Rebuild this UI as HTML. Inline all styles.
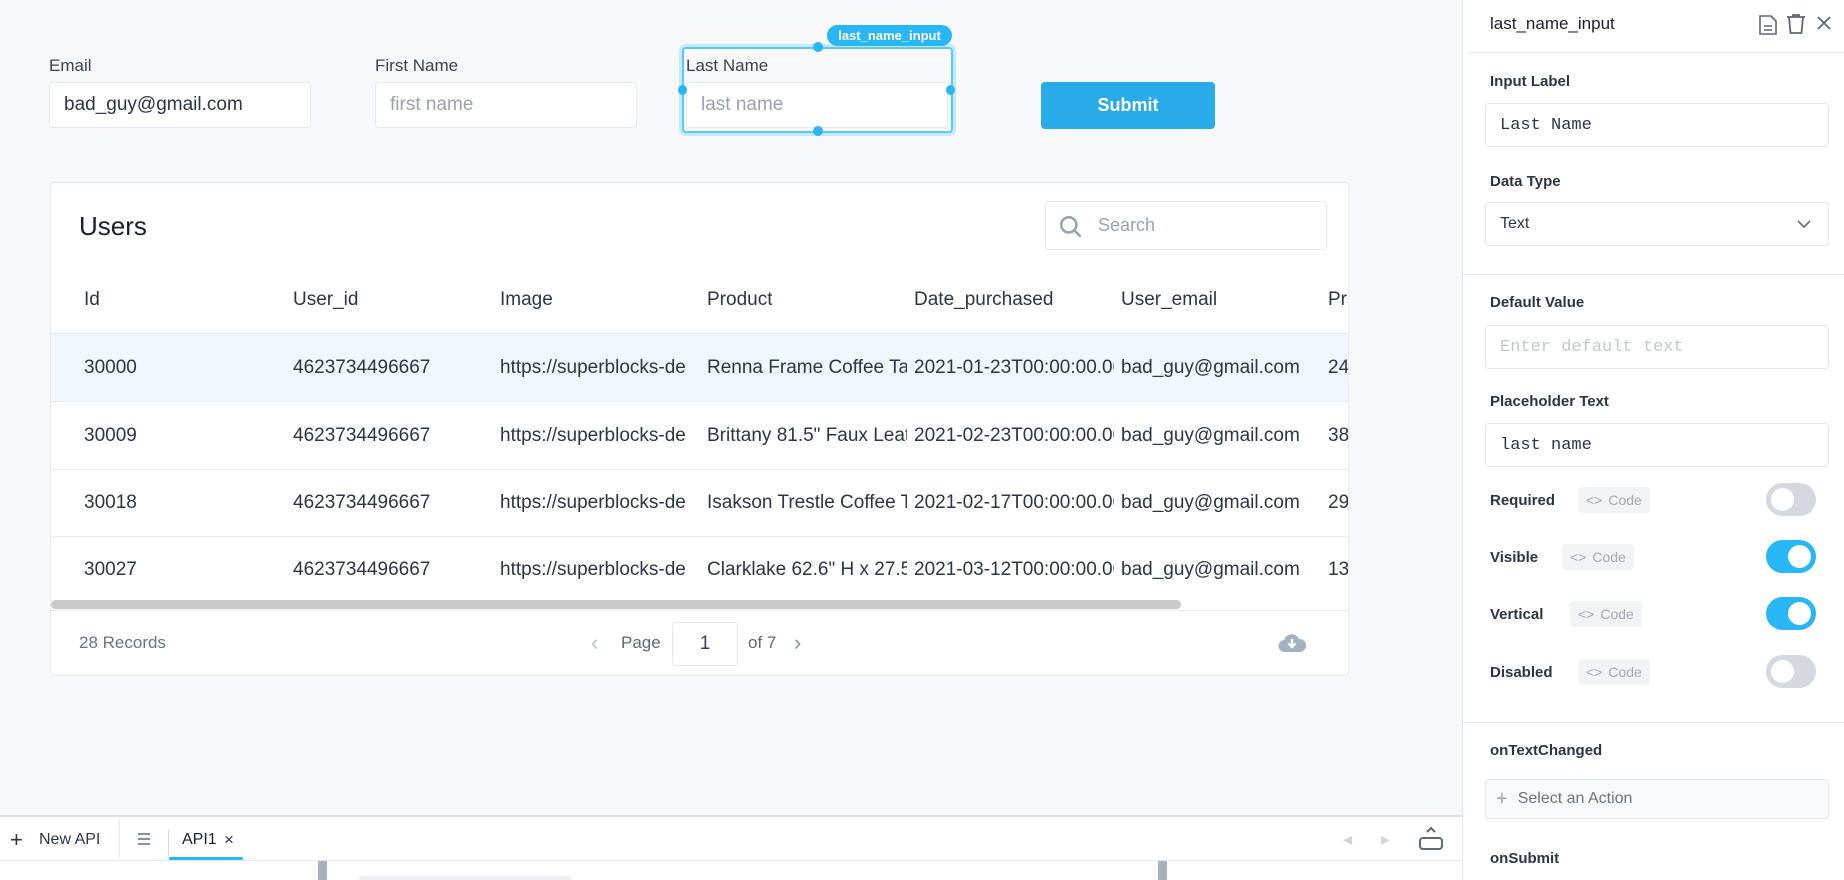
<!DOCTYPE html>
<html><head><meta charset="utf-8">
<style>
*{box-sizing:border-box;margin:0;padding:0}
body{width:1844px;height:880px;overflow:hidden;background:#f7f8fa;font-family:"Liberation Sans",sans-serif;color:#2d3444;position:relative}
.abs{position:absolute}
.lbl{font-size:17px;color:#3a4152;font-weight:500}
.inp{background:#fff;border:1px solid #e5e8ee;border-radius:4px;font-size:19px;padding-left:14px;display:flex;align-items:center}
.ph{color:#9aa1ad}
.card{background:#fff;border:1px solid #e6e8ed;border-radius:4px}
.cell{position:absolute;font-size:19px;white-space:nowrap;overflow:hidden;color:#2d3444}
.hline{position:absolute;left:0;height:1px;background:#e8eaee}
.panel{position:absolute;left:1462px;top:0;width:382px;height:880px;background:#fff;border-left:1px solid #e3e6eb}
.pl{position:absolute;left:27px;font-size:15px;font-weight:bold;color:#2d3444}
.pi{position:absolute;left:22px;width:344px;height:44px;border:1px solid #e3e6eb;border-radius:4px;font-family:"Liberation Mono",monospace;font-size:17px;display:flex;align-items:center;padding-left:14px;color:#2d3444}
.code{position:absolute;height:26px;background:#f1f3f5;border-radius:4px;color:#a2a8b3;font-size:14px;display:flex;align-items:center;padding:0 8px;gap:6px}
.tg{position:absolute;left:303px;width:50px;height:33px;border-radius:17px;background:#d5d9df}
.tg::after{content:"";position:absolute;top:5px;left:5px;width:23px;height:23px;border-radius:50%;background:#fff}
.tg.on{background:#29b6f6}
.tg.on::after{left:22px}
.sep{position:absolute;left:0;width:382px;height:1px;background:#e6e8ec}
</style></head><body>

<div class="abs lbl" style="left:49px;top:56px">Email</div>
<div class="abs inp" style="left:49px;top:82px;width:262px;height:46px">bad_guy@gmail.com</div>
<div class="abs lbl" style="left:375px;top:56px">First Name</div>
<div class="abs inp ph" style="left:375px;top:82px;width:262px;height:46px">first name</div>

<div class="abs" style="left:682px;top:47px;width:271px;height:86px;border:2px solid #5ac8fa;border-radius:4px;box-shadow:0 0 0 3px #c5e9fb"></div>
<div class="abs lbl" style="left:686px;top:56px">Last Name</div>
<div class="abs inp ph" style="left:686px;top:82px;width:262px;height:46px">last name</div>
<div class="abs" style="left:813px;top:42px;width:10px;height:10px;border-radius:50%;background:#29b6f6"></div>
<div class="abs" style="left:813px;top:126px;width:10px;height:10px;border-radius:50%;background:#29b6f6"></div>
<div class="abs" style="left:678px;top:85px;width:9px;height:10px;border-radius:50%;background:#29b6f6"></div>
<div class="abs" style="left:946px;top:85px;width:9px;height:10px;border-radius:50%;background:#29b6f6"></div>
<div class="abs" style="left:827px;top:25px;width:125px;height:21px;border-radius:11px;background:#29b6f6;color:#fff;font-size:13px;font-weight:bold;display:flex;align-items:center;justify-content:center">last_name_input</div>

<div class="abs" style="left:1041px;top:82px;width:174px;height:47px;background:#29aae9;border-radius:4px;color:#fff;font-size:18px;font-weight:bold;display:flex;align-items:center;justify-content:center">Submit</div>

<div class="abs card" style="left:50px;top:182px;width:1299px;height:494px;overflow:hidden">
  <div class="abs" style="left:28px;top:28px;font-size:26px;font-weight:500;color:#1a1f2b">Users</div>
  <div class="abs" style="left:994px;top:18px;width:282px;height:49px;border:1px solid #e6e8ed;border-radius:4px">
    <svg class="abs" style="left:12px;top:12px" width="26" height="26" viewBox="0 0 24 24" fill="none" stroke="#9aa3ae" stroke-width="2.4"><circle cx="10" cy="10" r="7"/><path d="M15 15l6 6"/></svg>
    <div class="abs ph" style="left:52px;top:13px;font-size:18px">Search</div>
  </div>
  <div class="cell" style="left:33px;top:106px">Id</div>
  <div class="cell" style="left:242px;top:106px">User_id</div>
  <div class="cell" style="left:449px;top:106px">Image</div>
  <div class="cell" style="left:656px;top:106px">Product</div>
  <div class="cell" style="left:863px;top:106px">Date_purchased</div>
  <div class="cell" style="left:1070px;top:106px">User_email</div>
  <div class="cell" style="left:1277px;top:106px">Pr</div>
  <div class="hline" style="top:150px;width:1299px"></div>
  <div class="abs" style="left:0;top:151px;width:1299px;height:67px;background:#f0f7fe"></div>
  <div class="hline" style="top:218px;width:1299px"></div>
  <div class="hline" style="top:286px;width:1299px"></div>
  <div class="hline" style="top:353px;width:1299px"></div>

  <div class="cell" style="left:33px;top:174px">30000</div><div class="cell" style="left:242px;top:174px">4623734496667</div><div class="cell" style="left:449px;top:174px;width:200px">https://superblocks-de</div><div class="cell" style="left:656px;top:174px;width:200px">Renna Frame Coffee Table</div><div class="cell" style="left:863px;top:174px;width:200px">2021-01-23T00:00:00.000</div><div class="cell" style="left:1070px;top:174px">bad_guy@gmail.com</div><div class="cell" style="left:1277px;top:174px">24</div>
  <div class="cell" style="left:33px;top:242px">30009</div><div class="cell" style="left:242px;top:242px">4623734496667</div><div class="cell" style="left:449px;top:242px;width:200px">https://superblocks-de</div><div class="cell" style="left:656px;top:242px;width:200px">Brittany 81.5" Faux Leather</div><div class="cell" style="left:863px;top:242px;width:200px">2021-02-23T00:00:00.000</div><div class="cell" style="left:1070px;top:242px">bad_guy@gmail.com</div><div class="cell" style="left:1277px;top:242px">38</div>
  <div class="cell" style="left:33px;top:309px">30018</div><div class="cell" style="left:242px;top:309px">4623734496667</div><div class="cell" style="left:449px;top:309px;width:200px">https://superblocks-de</div><div class="cell" style="left:656px;top:309px;width:200px">Isakson Trestle Coffee Table</div><div class="cell" style="left:863px;top:309px;width:200px">2021-02-17T00:00:00.000</div><div class="cell" style="left:1070px;top:309px">bad_guy@gmail.com</div><div class="cell" style="left:1277px;top:309px">29</div>
  <div class="cell" style="left:33px;top:376px">30027</div><div class="cell" style="left:242px;top:376px">4623734496667</div><div class="cell" style="left:449px;top:376px;width:200px">https://superblocks-de</div><div class="cell" style="left:656px;top:376px;width:200px">Clarklake 62.6" H x 27.5"</div><div class="cell" style="left:863px;top:376px;width:200px">2021-03-12T00:00:00.000</div><div class="cell" style="left:1070px;top:376px">bad_guy@gmail.com</div><div class="cell" style="left:1277px;top:376px">13</div>

  <div class="abs" style="left:0;top:417px;width:1130px;height:9px;border-radius:5px;background:#c9c9c9"></div>
  <div class="hline" style="top:427px;width:1299px"></div>
  <div class="abs" style="left:28px;top:450px;font-size:17px;color:#6b7280">28 Records</div>
  <div class="abs" style="left:540px;top:447px;font-size:22px;color:#b8bec7">&#8249;</div>
  <div class="abs" style="left:570px;top:450px;font-size:17px;color:#5f6775">Page</div>
  <div class="abs" style="left:621px;top:439px;width:66px;height:44px;border:1px solid #e3e6eb;border-radius:4px;font-size:19px;display:flex;align-items:center;justify-content:center;color:#3a4152">1</div>
  <div class="abs" style="left:697px;top:450px;font-size:17px;color:#5f6775">of 7</div>
  <div class="abs" style="left:743px;top:447px;font-size:22px;color:#8a919c">&#8250;</div>
  <svg class="abs" style="left:1227px;top:449px" width="28" height="22" viewBox="0 0 28 22"><path d="M7 20a6 6 0 0 1-1-12 8 8 0 0 1 15-1 6.5 6.5 0 0 1 1 13z" fill="#a3b1bf"/><path d="M14 7v8M10.5 11.5L14 15l3.5-3.5" stroke="#fff" stroke-width="2.4" fill="none"/></svg>
</div>

<!-- bottom bar -->
<div class="abs" style="left:0;top:815px;width:1462px;height:46px;background:#fff;border-top:2px solid #dcdfe4;border-bottom:1px solid #e6e8ec"></div>
<div class="abs" style="left:10px;top:827px;font-size:22px;color:#2d3444">+</div>
<div class="abs" style="left:39px;top:831px;font-size:16px;color:#2d3444">New API</div>
<div class="abs" style="left:119px;top:820px;width:1px;height:38px;background:#e6e8ec"></div>
<svg class="abs" style="left:137px;top:832px" width="14" height="14"><path d="M1 2h12M1 7h12M1 12h12" stroke="#8a919c" stroke-width="2"/></svg>
<div class="abs" style="left:168px;top:830px;width:1px;height:26px;background:#d5d8de"></div>
<div class="abs" style="left:182px;top:831px;font-size:16px;color:#1a1f2b">API1</div>
<div class="abs" style="left:224px;top:830px;font-size:17px;color:#2d3444">×</div>
<div class="abs" style="left:169px;top:857px;width:74px;height:3px;background:#29b6f6;border-radius:2px"></div>
<div class="abs" style="left:1343px;top:829px;font-size:18px;color:#d1d5db">&#9666;</div>
<div class="abs" style="left:1381px;top:829px;font-size:18px;color:#d1d5db">&#9656;</div>
<svg class="abs" style="left:1418px;top:826px" width="26" height="26" viewBox="0 0 26 26" fill="none" stroke="#5f6775" stroke-width="2"><path d="M9 6l4-4 4 4"/><rect x="2" y="12" width="22" height="11" rx="3"/></svg>
<div class="abs" style="left:0;top:861px;width:1462px;height:19px;background:#fff"></div>
<div class="abs" style="left:318px;top:861px;width:9px;height:19px;background:#a8b0ba"></div>
<div class="abs" style="left:1158px;top:861px;width:9px;height:19px;background:#a8b0ba"></div>
<div class="abs" style="left:359px;top:876px;width:212px;height:4px;background:#eceef1"></div>

<!-- right panel -->
<div class="panel">
  <div class="abs" style="left:27px;top:14px;font-size:17px;font-weight:500;color:#1a1f2b">last_name_input</div>
  <svg class="abs" style="left:295px;top:14px" width="20" height="22" viewBox="0 0 20 22" fill="none" stroke="#5f6775" stroke-width="1.6"><path d="M2 2h11l5 5v13H2z"/><path d="M6 12h8M6 16h8"/></svg>
  <svg class="abs" style="left:322px;top:13px" width="22" height="22" viewBox="0 0 22 22" fill="none" stroke="#5f6775" stroke-width="1.8"><path d="M2 4h18M8 4V2h6v2M4 4l1.5 16h11L18 4"/></svg>
  <svg class="abs" style="left:353px;top:15px" width="16" height="16" viewBox="0 0 16 16" stroke="#5f6775" stroke-width="1.8"><path d="M2 2l12 12M14 2L2 14"/></svg>
  <div class="abs" style="left:5px;top:52px;width:377px;height:1px;background:#e6e8ec"></div>

  <div class="pl" style="top:73px">Input Label</div>
  <div class="pi" style="top:103px">Last Name</div>
  <div class="pl" style="top:173px">Data Type</div>
  <div class="pi" style="top:202px;font-family:'Liberation Sans',sans-serif;font-size:16px">Text
    <svg class="abs" style="left:310px;top:16px" width="16" height="10" viewBox="0 0 16 10" fill="none" stroke="#6b7280" stroke-width="1.8"><path d="M2 2l6 6 6-6"/></svg></div>
  <div class="sep" style="top:274px"></div>

  <div class="pl" style="top:294px">Default Value</div>
  <div class="pi" style="top:325px;color:#c3c8cf">Enter default text</div>
  <div class="pl" style="top:393px">Placeholder Text</div>
  <div class="pi" style="top:423px">last name</div>

  <div class="pl" style="top:492px">Required</div>
  <div class="code" style="left:115px;top:487px">&lt;&gt; <span>Code</span></div>
  <div class="tg" style="top:483px"></div>
  <div class="pl" style="top:549px">Visible</div>
  <div class="code" style="left:99px;top:544px">&lt;&gt; <span>Code</span></div>
  <div class="tg on" style="top:540px"></div>
  <div class="pl" style="top:606px">Vertical</div>
  <div class="code" style="left:107px;top:601px">&lt;&gt; <span>Code</span></div>
  <div class="tg on" style="top:597px"></div>
  <div class="pl" style="top:664px">Disabled</div>
  <div class="code" style="left:115px;top:659px">&lt;&gt; <span>Code</span></div>
  <div class="tg" style="top:655px"></div>
  <div class="sep" style="top:722px"></div>

  <div class="pl" style="top:742px">onTextChanged</div>
  <div class="abs" style="left:22px;top:779px;width:344px;height:40px;border:1px solid #e3e6eb;border-radius:4px;background:#f9fafb;display:flex;align-items:center;padding-left:10px;font-size:16px;color:#6b7280"><span style="font-size:20px;color:#9aa1ad;margin-right:10px">+</span>Select an Action</div>
  <div class="pl" style="top:850px">onSubmit</div>
</div>
</body></html>
